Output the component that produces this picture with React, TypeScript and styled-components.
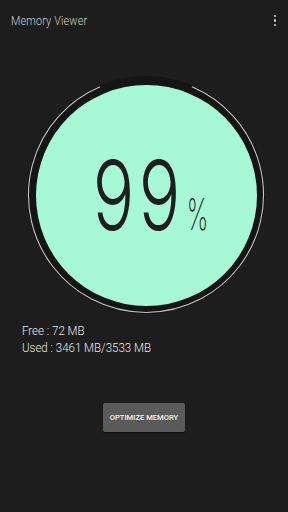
import React from "react";
import styled, { createGlobalStyle } from "styled-components";

const Global = createGlobalStyle`
  html, body { margin: 0; padding: 0; background: #1d1d1d; }
  body { width: 288px; height: 512px; overflow: hidden; }
`;

const Screen = styled.div`
  width: 288px;
  height: 512px;
  background: #1d1d1d;
  display: flex;
  flex-direction: column;
  font-family: Roboto, "Noto Sans", sans-serif;
`;

const Header = styled.header`
  height: 40px;
  padding: 0 12px 0 11px;
  display: flex;
  align-items: center;
  justify-content: space-between;
  box-sizing: border-box;
`;

const Title = styled.h1`
  margin: 0;
  font-family: Roboto, sans-serif;
  font-weight: 300;
  font-size: 13.5px;
  color: #cfcfcf;
  transform: scaleX(0.8);
  transform-origin: left center;
  white-space: nowrap;
  letter-spacing: 0.2px;
`;

const MenuDots = styled.div`
  display: flex;
  flex-direction: column;
  gap: 2px;
  padding-top: 1px;
`;

const Dot = styled.span`
  width: 2.5px;
  height: 2.5px;
  background: #d0d0d0;
  border-radius: 1px;
`;

const GaugeRow = styled.div`
  display: flex;
  justify-content: center;
  padding: 35px 0 0 4px;
`;

const GaugeFrame = styled.div`
  position: relative;
  width: 240px;
  height: 240px;
  display: flex;
  align-items: center;
  justify-content: center;
`;

const Rings = styled.svg`
  position: absolute;
  inset: 0;
`;

const Face = styled.div`
  position: relative;
  width: 221px;
  height: 221px;
  border-radius: 50%;
  background: #a6f8d6;
  display: flex;
  align-items: center;
  justify-content: center;
`;

const Reading = styled.div`
  display: flex;
  align-items: baseline;
  margin: 0 0 0 12px;
  color: #1e1e1e;
`;

const Big = styled.span`
  font-family: Inter, sans-serif;
  font-weight: 300;
  font-size: 96px;
  line-height: 1;
  letter-spacing: 6px;
  display: inline-block;
  transform: scaleX(0.72);
  margin: 0 -24px 0 -12px;
`;

const Pct = styled.span`
  font-family: Inter, sans-serif;
  font-weight: 200;
  font-size: 44px;
  line-height: 1;
  display: inline-block;
  transform: scaleX(0.55);
`;

const Stats = styled.div`
  padding: 9px 0 0 22px;
  display: flex;
  flex-direction: column;
  gap: 4px;
`;

const StatLine = styled.div`
  font-family: Roboto, sans-serif;
  font-weight: 300;
  font-size: 12.5px;
  line-height: 13px;
  color: #e8e8e8;
  transform: scaleX(0.92);
  transform-origin: left center;
  white-space: nowrap;
`;

const ButtonRow = styled.div`
  display: flex;
  justify-content: center;
  padding: 49px 0 0 0;
`;

const OptimizeButton = styled.button`
  width: 82px;
  height: 29px;
  background: #5a5a5a;
  border: none;
  border-radius: 2px;
  color: #f2f2f2;
  font-family: Roboto, sans-serif;
  font-weight: 500;
  font-size: 7.6px;
  padding: 0;
  box-shadow: 0 1px 2px rgba(0, 0, 0, 0.5);
`;

export default function App() {
  return (
    <Screen>
      <Global />
      <Header>
        <Title>Memory Viewer</Title>
        <MenuDots>
          <Dot />
          <Dot />
          <Dot />
        </MenuDots>
      </Header>
      <GaugeRow>
        <GaugeFrame>
          <Rings width="240" height="240" viewBox="0 0 240 240">
            <circle cx="120" cy="120" r="119" fill="#151515" />
            <path
              d="M165.9 11.8 A117.5 117.5 0 1 1 74.1 11.8"
              fill="none"
              stroke="#c4c4c4"
              strokeWidth="1.1"
            />
          </Rings>
          <Face>
            <Reading>
              <Big>99</Big>
              <Pct>%</Pct>
            </Reading>
          </Face>
        </GaugeFrame>
      </GaugeRow>
      <Stats>
        <StatLine>Free : 72 MB</StatLine>
        <StatLine>Used : 3461 MB/3533 MB</StatLine>
      </Stats>
      <ButtonRow>
        <OptimizeButton>OPTIMIZE MEMORY</OptimizeButton>
      </ButtonRow>
    </Screen>
  );
}
